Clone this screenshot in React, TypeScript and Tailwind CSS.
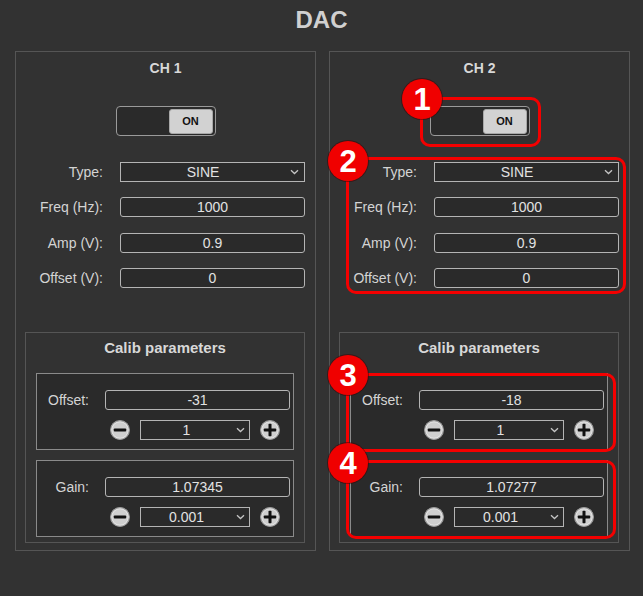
import React from 'react';

interface Channel {
    name: string;
    calibOffset: string;
    calibGain: string;
}

const channels: Channel[] = [
    { name: 'CH 1', calibOffset: '-31', calibGain: '1.07345' },
    { name: 'CH 2', calibOffset: '-18', calibGain: '1.07277' },
];

function Chevron() {
    return (
        <svg width="9" height="6" viewBox="0 0 9 6">
            <path d="M1 1.2l3.5 3.3L8 1.2" fill="none" stroke="#c4c4c4" strokeWidth="1.3" />
        </svg>
    );
}

function RoundButton({ plus }: { plus?: boolean }) {
    return (
        <svg width="20" height="20" viewBox="0 0 20 20" className="shrink-0">
            <circle cx="10" cy="10" r="9.4" fill="#e6e6e6" stroke="#9a9a9a" strokeWidth="1.2" />
            <circle cx="10" cy="10" r="7.8" fill="#cfcfcf" />
            <rect x="3.8" y="8.5" width="12.4" height="3" rx="0.8" fill="#111" />
            {plus && <rect x="8.5" y="3.8" width="3" height="12.4" rx="0.8" fill="#111" />}
        </svg>
    );
}

function TextInput({ value }: { value: string }) {
    return (
        <div className="flex h-[20px] w-[185px] items-center justify-center rounded-[3px] border border-[#b4b4b4] bg-[#2a2a2a] text-[14px] text-[#e2e2e2]">
            {value}
        </div>
    );
}

function SelectBox({ value, width, arrow }: { value: string; width: string; arrow: string }) {
    return (
        <div className={`flex h-[20px] items-center border border-[#b4b4b4] bg-[#2a2a2a] text-[14px] text-[#e2e2e2] ${width}`}>
            <span className="flex-1 text-center">{value}</span>
            <span className={`flex justify-center ${arrow}`}>
                <Chevron />
            </span>
        </div>
    );
}

function Toggle() {
    return (
        <div className="flex h-[30px] w-[100px] items-center justify-end self-center rounded-[4px] border border-[#9a9a9a] bg-[#2a2a2a] pr-[2px]">
            <div className="flex h-[25px] w-[44px] items-center justify-center rounded-[3px] border border-[#a8a8a8] bg-[#d2d2d2] text-[11px] font-bold text-[#111]">
                ON
            </div>
        </div>
    );
}

function Row({ label, children, className }: { label: string; children: React.ReactNode; className?: string }) {
    return (
        <div className={`flex h-[20px] items-center ${className ?? ''}`}>
            <span className="w-[87px] text-right text-[14px] text-[#d4d4d4]">{label}</span>
            <div className="ml-[17px]">{children}</div>
        </div>
    );
}

function CalibBox({ label, value, step, className }: { label: string; value: string; step: string; className?: string }) {
    return (
        <div className={`w-[258px] border border-[#8a8a8a] bg-[#2a2a2a] pt-[16px] pb-[9px] ${className ?? ''}`}>
            <div className="flex h-[20px] items-center">
                <span className="w-[52px] text-right text-[14px] text-[#d4d4d4]">{label}</span>
                <div className="ml-[16px]">
                    <TextInput value={value} />
                </div>
            </div>
            <div className="mt-[10px] flex items-center gap-[10px] pl-[73px]">
                <RoundButton />
                <SelectBox value={step} width="w-[110px]" arrow="w-[17px]" />
                <RoundButton plus />
            </div>
        </div>
    );
}

function ChannelPanel({ ch }: { ch: Channel }) {
    return (
        <div className="flex h-[500px] w-[301px] flex-col border border-[#555]">
            <div className="mt-[8px] text-center text-[14px] font-bold leading-[16px] text-[#d8d8d8]">{ch.name}</div>
            <div className="mt-[30px] flex flex-col">
                <Toggle />
            </div>
            <div className="mt-[26px]">
                <Row label="Type:">
                    <SelectBox value="SINE" width="w-[185px]" arrow="w-[19px]" />
                </Row>
                <Row label="Freq (Hz):" className="mt-[15px]">
                    <TextInput value="1000" />
                </Row>
                <Row label="Amp (V):" className="mt-[16px]">
                    <TextInput value="0.9" />
                </Row>
                <Row label="Offset (V):" className="mt-[15px]">
                    <TextInput value="0" />
                </Row>
            </div>
            <div className="mt-[44px] ml-[9px] w-[280px] border border-[#555] pt-[7px] pb-[5px] pl-[10px]">
                <div className="text-center text-[15px] font-bold leading-[16px] text-[#d8d8d8] pr-[10px]">Calib parameters</div>
                <CalibBox label="Offset:" value={ch.calibOffset} step="1" className="mt-[17px]" />
                <CalibBox label="Gain:" value={ch.calibGain} step="0.001" className="mt-[10px]" />
            </div>
        </div>
    );
}

const frame = 'absolute rounded-[10px] border-[3px] border-[#f40000]';
const badge =
    'absolute flex h-[40px] w-[40px] items-center justify-center rounded-full bg-[#f00000] text-[31px] font-black leading-none text-white shadow-[0_0_0_1px_rgba(60,0,0,0.5)]';

export default function App() {
    return (
        <div className="relative h-[596px] w-[643px] overflow-hidden bg-[#323232] font-['Liberation_Sans',Arial,sans-serif]">
            <h1 className="pt-[6px] text-center text-[24px] font-bold leading-[28px] text-[#d0d0d0]">DAC</h1>
            <div className="mt-[17px] flex gap-[13px] pl-[15px]">
                {channels.map(ch => (
                    <ChannelPanel key={ch.name} ch={ch} />
                ))}
            </div>

            {/* annotation overlay */}
            <div className={`${frame} left-[420px] top-[97px] h-[50px] w-[121px]`} />
            <div className={`${frame} left-[346px] top-[157px] h-[137px] w-[280px]`} />
            <div className={`${frame} left-[346px] top-[373px] h-[79px] w-[270px]`} />
            <div className={`${frame} left-[346px] top-[460px] h-[79px] w-[270px]`} />
            <div className={`${badge} left-[402px] top-[79px]`}>1</div>
            <div className={`${badge} left-[328px] top-[141px]`}>2</div>
            <div className={`${badge} left-[328px] top-[355px]`}>3</div>
            <div className={`${badge} left-[328px] top-[443px]`}>4</div>
        </div>
    );
}
